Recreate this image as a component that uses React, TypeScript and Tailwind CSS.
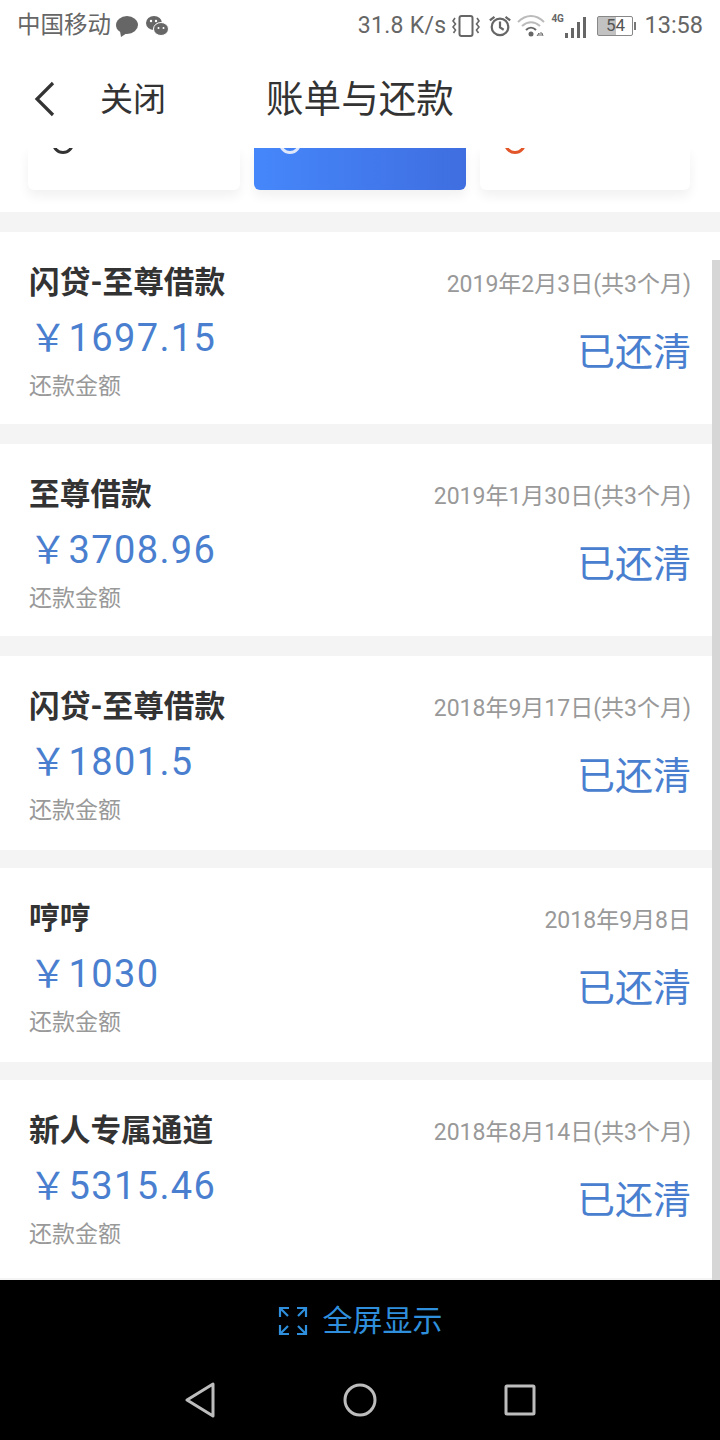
const FONT = "font-['Roboto','Noto_Sans_CJK_SC',sans-serif]";

const bills = [
  { name: "闪贷-至尊借款", date: "2019年2月3日(共3个月)", amount: "1697.15", height: "h-[192px]", gap: "h-[20px]" },
  { name: "至尊借款", date: "2019年1月30日(共3个月)", amount: "3708.96", height: "h-[192px]", gap: "h-[20px]" },
  { name: "闪贷-至尊借款", date: "2018年9月17日(共3个月)", amount: "1801.5", height: "h-[194px]", gap: "h-[18px]" },
  { name: "哼哼", date: "2018年9月8日", amount: "1030", height: "h-[194px]", gap: "h-[18px]" },
  { name: "新人专属通道", date: "2018年8月14日(共3个月)", amount: "5315.46", height: "h-[198px]", gap: "h-[2px]" },
];

function StatusBar() {
  return (
    <div className="flex h-[50px] items-center justify-between pl-[17px] pr-[17px] pt-[1px] text-[#666]">
      <div className="flex items-center">
        <span className="text-[23.5px] leading-none">中国移动</span>
        <svg width="24" height="22" viewBox="0 0 24 22" className="ml-[4px]" fill="#666">
          <ellipse cx="12" cy="10" rx="11" ry="9" />
          <path d="M5 16l1 6 6-4z" />
        </svg>
        <svg width="24" height="22" viewBox="0 0 24 22" className="ml-[6px]" fill="#666">
          <ellipse cx="9" cy="8" rx="8" ry="7" />
          <ellipse cx="16" cy="14" rx="7.5" ry="6.5" stroke="#fff" strokeWidth="1" />
          <circle cx="6" cy="6" r="1.2" fill="#fff" />
          <circle cx="11" cy="6" r="1.2" fill="#fff" />
          <circle cx="13.5" cy="13" r="1" fill="#fff" />
          <circle cx="18.5" cy="13" r="1" fill="#fff" />
        </svg>
      </div>
      <div className="flex items-center">
        <span className="text-[23px] leading-none tracking-[0.3px]">31.8 K/s</span>
        <svg width="28" height="24" viewBox="0 0 28 24" className="ml-[6px]" fill="none" stroke="#666" strokeWidth="2">
          <rect x="7.5" y="2" width="13" height="20" rx="2" />
          <path d="M3 4l-2 3 2.500 3-2.500 3 2.500 3-2 3M25 4l2 3-2.500 3 2.500 3-2.500 3 2 3" strokeWidth="1.600" />
        </svg>
        <svg width="24" height="24" viewBox="0 0 26 24" className="ml-[8px]" fill="none" stroke="#666" strokeWidth="2.400">
          <circle cx="13" cy="13" r="9" />
          <path d="M13 7v6.500l4 2.500M2 6l5-4M24 6l-5-4" />
        </svg>
        <svg width="28" height="24" viewBox="0 0 28 24" className="ml-[5px]" fill="none">
          <path d="M1 8c8-8 18-8 26 0M5 12c6-5 12-5 18 0" stroke="#bbb" strokeWidth="2" />
          <path d="M9 16c3-3 7-3 10 0" stroke="#666" strokeWidth="2" />
          <circle cx="14" cy="20" r="2.500" fill="#666" />
          <path d="M20 22l2-3v3M24 22v-4M26 22l-1-3" stroke="#666" strokeWidth="1" />
        </svg>
        <div className="relative ml-[6px] flex h-[24px] w-[36px] items-end justify-end">
          <span className="absolute left-0 top-[0px] text-[10px] font-bold leading-[10px] tracking-[-0.3px]">4G</span>
          <div className="flex items-end gap-[3px] pr-[1px]">
            <span className="h-[5px] w-[3px] bg-[#666]" />
            <span className="h-[10px] w-[3px] bg-[#666]" />
            <span className="h-[16px] w-[3px] bg-[#666]" />
            <span className="h-[21px] w-[3px] bg-[#666]" />
          </div>
        </div>
        <div className="ml-[10px] flex items-center">
          <div className="flex h-[20px] w-[36px] items-center justify-center overflow-hidden rounded-[2px] border border-[#888] bg-[linear-gradient(90deg,#c2c2c2_54%,#fff_54%)] text-[17px] leading-none text-[#555]">
            54
          </div>
          <span className="ml-[1px] h-[8px] w-[2px] bg-[#777]" />
        </div>
        <span className="ml-[8px] text-[23.5px] leading-none">13:58</span>
      </div>
    </div>
  );
}

function Header() {
  return (
    <div className="relative flex h-[98px] items-center text-[#333]">
      <svg width="24" height="36" viewBox="0 0 24 36" fill="none" stroke="#333" strokeWidth="3.200" className="ml-[33px]">
        <path d="M20 2L4 18l16 16" />
      </svg>
      <span className="ml-[43px] text-[33px] leading-none">关闭</span>
      <span className="absolute left-[266px] mt-[2px] text-[37.6px] leading-none">账单与还款</span>
    </div>
  );
}

function TabCards() {
  return (
    <div className="flex h-[64px] shrink-0 items-start gap-[14px] pl-[28px] pr-[30px]">
      <div className="relative h-[42px] w-[212px] overflow-hidden rounded-b-[6px] bg-white shadow-[0_6px_12px_rgba(0,0,0,0.06)]">
        <span className="absolute left-[24px] top-[-18px] h-[24px] w-[22px] rounded-full border-[3px] border-[#333]" />
      </div>
      <div className="relative h-[42px] w-[212px] overflow-hidden rounded-b-[6px] bg-[linear-gradient(90deg,#4587fb,#3f6ee0)] shadow-[0_6px_12px_rgba(0,0,0,0.06)]">
        <span className="absolute left-[25px] top-[-17px] h-[23px] w-[22px] rounded-full border-[3px] border-[#dfe8fb]" />
      </div>
      <div className="relative h-[42px] w-[210px] overflow-hidden rounded-b-[6px] bg-white shadow-[0_6px_12px_rgba(0,0,0,0.06)]">
        <span className="absolute left-[24px] top-[-18px] h-[24px] w-[22px] rounded-full border-[3px] border-[#e2562a]" />
      </div>
    </div>
  );
}

function BillCard({ bill }: { bill: (typeof bills)[number] }) {
  return (
    <>
      <div className={`flex shrink-0 flex-col bg-white pl-[29px] pr-[29px] pt-[30px] ${bill.height}`}>
        <div className="flex items-start justify-between">
          <span className="text-[30.7px] font-bold leading-[42px] text-[#333]">{bill.name}</span>
          <span className="mt-[2px] text-[23px] leading-[42px] text-[#999]">{bill.date}</span>
        </div>
        <div className="flex items-start justify-between">
          <div className="flex flex-col">
            <span className="mt-[10px] text-[38px] leading-[44px] tracking-[1.4px] text-[#4a7fd0]">￥{bill.amount}</span>
            <span className="mt-[11px] text-[23px] leading-[32px] text-[#999]">还款金额</span>
          </div>
          <span className="mt-[23px] text-[38px] leading-[46px] text-[#4a7fd0]">已还清</span>
        </div>
      </div>
      <div className={`shrink-0 bg-[#f4f4f4] ${bill.gap}`} />
    </>
  );
}

export default function App() {
  return (
    <div className={`flex h-[1440px] w-[720px] flex-col overflow-hidden bg-white ${FONT}`}>
      <StatusBar />
      <Header />
      <div className="relative flex h-[1132px] flex-col overflow-hidden">
        <TabCards />
        <div className="h-[20px] shrink-0 bg-[#f4f4f4]" />
        {bills.map((bill) => (
          <BillCard key={bill.amount} bill={bill} />
        ))}
        <div className="absolute bottom-0 right-0 top-[112px] w-[8px] bg-[#d6d6d6]" />
      </div>
      <div className="flex h-[160px] flex-col items-center bg-black">
        <div className="flex h-[82px] items-center gap-[15px] text-[#2f8fdc]">
          <svg width="30" height="30" viewBox="0 0 30 30" fill="none" stroke="#2f8fdc" strokeWidth="2.200">
            <path d="M2 11V2h9M2 2l8 8M19 2h9v9M28 2l-8 8M2 19v9h9M2 28l8-8M28 19v9h-9M28 28l-8-8" />
          </svg>
          <span className="text-[30px] leading-none">全屏显示</span>
        </div>
        <div className="flex h-[78px] items-start pl-[9px] pt-[20px]">
          <svg width="360" height="36" viewBox="0 0 360 36" fill="none" stroke="#bdbdbd" strokeWidth="3" strokeLinejoin="round">
            <path d="M28 2v32L2 18z" />
            <circle cx="175" cy="18" r="15" />
            <rect x="321" y="4" width="28" height="28" rx="1" />
          </svg>
        </div>
      </div>
    </div>
  );
}
